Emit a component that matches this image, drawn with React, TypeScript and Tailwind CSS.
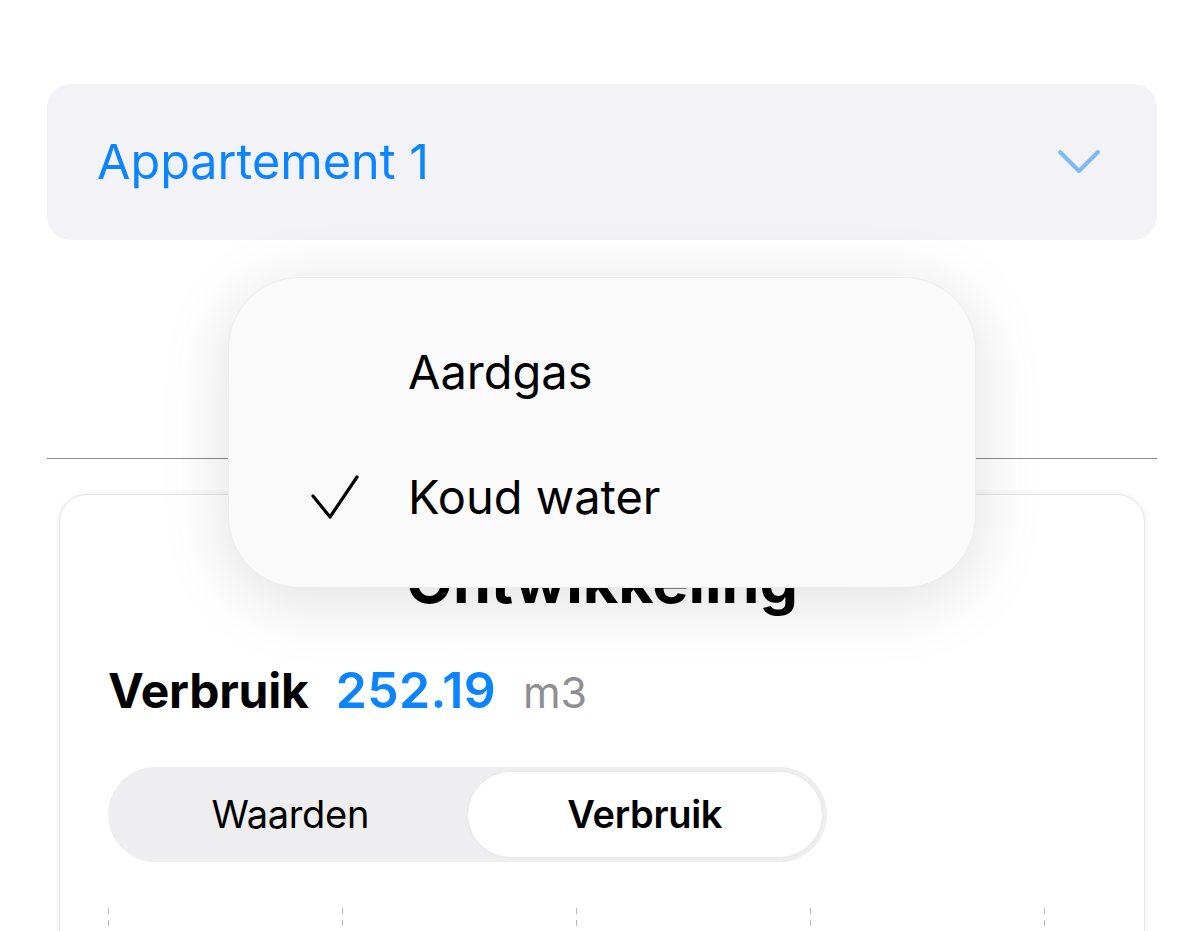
import React from "react";

const tick = "h-[24px] w-px bg-[repeating-linear-gradient(to_bottom,#b8b8b8_0px,#b8b8b8_6px,transparent_6px,transparent_12px)]";

export default function App() {
  return (
    <div className="relative w-[1204px] h-[931px] overflow-hidden bg-white font-['Inter',sans-serif] text-black">
      <div className="px-[47px] pt-[84px]">
        <div className="h-[156px] rounded-[24px] bg-[#f2f2f7] flex items-center justify-between pl-[50px] pr-[56px]">
          <span className="text-[48.5px] leading-none text-[#0a84ff]">Appartement 1</span>
          <svg width="44" height="26" viewBox="0 0 44 26" fill="none">
            <path d="M3 3 L22 22 L41 3" stroke="#7cb9f5" strokeWidth="4" strokeLinecap="round" strokeLinejoin="round" />
          </svg>
        </div>
        <div className="h-[218px]" />
        <div className="h-px bg-[#8a8a8a]" />
        <div className="mx-[12px] mt-[35px] h-[500px] rounded-[28px] bg-white border border-[#e6e6e6] shadow-[0_0_6px_rgba(0,0,0,0.08)] px-[48px] pt-[56px]">
          <div className="text-center text-[61px] leading-none font-bold">Ontwikkeling</div>
          <div className="mt-[53px] flex items-baseline leading-none">
            <span className="text-[48px] font-bold tracking-[-0.2px]">Verbruik</span>
            <span className="ml-[27px] text-[50px] font-semibold text-[#0a84ff] tracking-[0.3px]">252.19</span>
            <span className="ml-[27px] text-[43px] text-[#8e8e93]">m3</span>
          </div>
          <div className="mt-[52px] w-[719px] h-[95px] rounded-full bg-[#eeeef0] p-[5px] flex">
            <div className="flex-1 flex items-center justify-center text-[38px] tracking-[-0.3px]">Waarden</div>
            <div className="flex-1 flex items-center justify-center rounded-full bg-white text-[38px] font-semibold tracking-[-0.3px] shadow-[0_0_3px_rgba(0,0,0,0.06)]">Verbruik</div>
          </div>
          <div className="mt-[46px] w-[937px] flex justify-between">
            <div className={tick} />
            <div className={tick} />
            <div className={tick} />
            <div className={tick} />
            <div className={tick} />
          </div>
        </div>
      </div>

      <div className="absolute left-[228px] top-[277px] w-[748px] h-[311px] rounded-[72px] bg-[#fafafa] border border-[#ececec] shadow-[0_12px_70px_rgba(0,0,0,0.13)] pt-[31px] pb-[30px]">
        <div className="h-[125px] flex items-center">
          <div className="w-[179px]" />
          <span className="text-[47px] leading-none">Aardgas</span>
        </div>
        <div className="h-[125px] flex items-center">
          <div className="w-[179px] pl-[82px] flex items-center">
            <svg width="48" height="44" viewBox="0 0 48 44" fill="none">
              <path d="M2 21 L19 42 L46 2" stroke="#000" strokeWidth="3.2" strokeLinecap="round" strokeLinejoin="round" />
            </svg>
          </div>
          <span className="text-[47px] leading-none">Koud water</span>
        </div>
      </div>
    </div>
  );
}
